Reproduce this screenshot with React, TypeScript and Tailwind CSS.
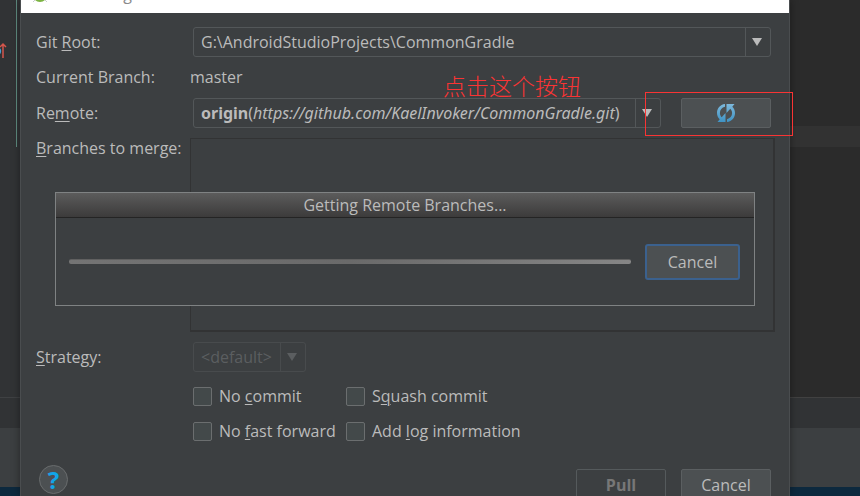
import type { ReactNode } from "react";

function Mnemonic({ children }: { children: ReactNode }) {
  return <span className="underline decoration-1 underline-offset-2">{children}</span>;
}

function Arrow({ dim }: { dim?: boolean }) {
  return (
    <svg
      width="10"
      height="8"
      viewBox="0 0 10 8"
      className={dim ? "fill-[#5b5e60]" : "fill-[#bbbbbb]"}
      aria-hidden="true"
    >
      <path d="M0 0H10L5 8Z" />
    </svg>
  );
}

function Combo({ id, value, disabled }: { id: string; value: string; disabled?: boolean }) {
  return (
    <div
      className={
        disabled
          ? "flex h-[30px] w-[113px] rounded-[3px] border border-[#484b4d] text-[#5b5e60]"
          : "flex h-[30px] w-full rounded-[3px] border border-[#535759]"
      }
    >
      <select
        id={id}
        disabled={disabled}
        defaultValue={value}
        className="min-w-0 flex-1 appearance-none bg-transparent px-[7px] leading-6 outline-none"
      >
        <option>{value}</option>
      </select>
      <span
        className={
          disabled
            ? "flex w-[25px] items-center justify-center border-l border-[#484b4d] pr-[2px]"
            : "flex w-[25px] items-center justify-center border-l border-[#535759] pr-[2px]"
        }
      >
        <Arrow dim={disabled} />
      </span>
    </div>
  );
}

function Check({ children }: { children: ReactNode }) {
  return (
    <label className="flex h-5 items-center gap-[7px] whitespace-nowrap">
      <input
        type="checkbox"
        className="h-[19px] w-[19px] appearance-none rounded-[2px] border border-[#6b6e6f] bg-[#43494a]"
      />
      <span>{children}</span>
    </label>
  );
}

function RefreshIcon() {
  return (
    <svg width="18" height="18" viewBox="0 0 18 18" aria-hidden="true">
      <defs>
        <linearGradient id="refresh" x1="0" y1="0" x2="0" y2="1">
          <stop offset="0" stopColor="#7db9dc" />
          <stop offset="1" stopColor="#3f93c4" />
        </linearGradient>
      </defs>
      <g fill="url(#refresh)">
        <path d="M8 0C3 .5 0 4.500 0 9c0 2.500 1 4.700 2.700 6.300L.5 18H8.500V9L4.700 13.300C3.600 12.200 2.900 10.700 2.900 9c0-3 2-5.500 5.100-6.200Z" />
        <path d="M10 18c5-.5 8-4.500 8-9 0-2.500-1-4.700-2.700-6.300L17.500 0H9.500v9l3.800-4.300C14.400 5.800 15.100 7.300 15.100 9c0 3-2 5.500-5.100 6.200Z" />
      </g>
    </svg>
  );
}

function Gutter() {
  return (
    <div className="flex w-5 shrink-0 flex-col bg-[#313335]">
      <div className="flex h-[147px] justify-between pr-[3px]">
        <svg width="7" height="18" viewBox="0 0 7 18" className="mt-[42px]" aria-hidden="true">
          <path d="M0 6.500C1.500 7 1.500 11 0 12Z" fill="#4a9fd0" />
          <path d="M3 16V2M0 5L3 2L6 5" fill="none" stroke="#d5564c" strokeWidth="1.500" />
        </svg>
        <span className="w-px bg-[#5f8c81]" />
      </div>
      <div className="h-[250px]" />
      <div className="h-[31px] border-t border-[#3f4143]" />
      <div className="h-[59px] bg-[#3c3f41]" />
      <div className="flex-1 bg-[#0d293e]" />
    </div>
  );
}

function EditorEdge() {
  return (
    <div className="flex w-[70px] shrink-0 flex-col bg-[#2b2b2b]">
      <div className="h-[126px]" />
      <div className="h-[21px] bg-[#323232]" />
      <div className="h-[250px]" />
      <div className="h-[31px] border-t border-[#414141] bg-[#313335]" />
      <div className="h-[59px] bg-[#3c3f41]" />
      <div className="flex-1 bg-[#0d293e]" />
    </div>
  );
}

function TitleBar() {
  return (
    <header className="flex h-[13px] items-start overflow-hidden bg-white pl-3">
      <svg width="14" height="3" viewBox="0 0 14 3" aria-hidden="true">
        <path d="M2 0H12Q10 2 7 2T2 0Z" fill="#7cb342" />
        <path d="M0 2L2 0M14 2L12 0" stroke="#c9cdd0" />
      </svg>
      <h1 className="-mt-[18px] ml-1.5 h-6 leading-6 text-[#8a8a8a]">Pull Changes</h1>
    </header>
  );
}

function ProgressDialog() {
  return (
    <section
      role="dialog"
      aria-labelledby="progress-title"
      className="absolute inset-x-[34px] top-[192px] border border-[#7f8283] bg-[#3c3f41]"
    >
      <h2
        id="progress-title"
        className="h-[25px] border-b border-[#242424] bg-linear-to-b from-[#5c5c5c] to-[#3c3b3b] text-center leading-6"
      >
        Getting Remote Branches...
      </h2>
      <div className="flex h-[87px] items-center gap-[14px] pr-[14px] pl-[13px]">
        <div
          role="progressbar"
          aria-labelledby="progress-title"
          className="h-[5px] flex-1 rounded-[2px] border-t border-[#606060] bg-linear-to-r from-[#747474] via-[#6a6a6a] to-[#868686]"
        />
        <button
          type="button"
          className="h-9 w-[95px] rounded-[3px] border-2 border-[#3b618e] bg-[#4c5052]"
        >
          Cancel
        </button>
      </div>
    </section>
  );
}

export default function App() {
  return (
    <div className="flex h-screen overflow-hidden bg-[#2b2b2b] font-['Open_Sans','Noto_Sans_CJK_SC',sans-serif] text-base text-[#bbbbbb]">
      <Gutter />
      <main className="relative min-w-0 flex-1 border-x border-[#4a4d4f] bg-[#3c3f41] shadow-[0_0_8px_rgba(0,0,0,0.4)]">
        <TitleBar />
        <form className="flex flex-col px-[15px] pt-[14px]">
          <div className="flex items-center pr-[3px]">
            <label htmlFor="root" className="w-[157px] shrink-0">
              Git <Mnemonic>R</Mnemonic>oot:
            </label>
            <Combo id="root" value="G:\AndroidStudioProjects\CommonGradle" />
          </div>
          <div className="flex h-[41px] items-center pb-[2px]">
            <span className="w-[154px]">Current Branch:</span>
            <span>master</span>
          </div>
          <div className="flex items-center pr-[3px]">
            <label htmlFor="remote" className="w-[157px] shrink-0">
              Re<Mnemonic>m</Mnemonic>ote:
            </label>
            <button
              id="remote"
              type="button"
              aria-haspopup="listbox"
              className="flex h-[30px] min-w-0 flex-1 items-stretch rounded-[3px] border border-[#535759] text-left"
            >
              <span className="min-w-0 flex-1 overflow-hidden pl-[7px] font-['Noto_Sans',sans-serif] leading-7 whitespace-nowrap">
                <b>origin</b>(<i>https://github.com/KaelInvoker/CommonGradle.git</i>)
              </span>
              <span className="flex w-[25px] items-center justify-center border-l border-[#535759] pr-[2px]">
                <Arrow />
              </span>
            </button>
            <button
              type="button"
              aria-label="Refresh remote branches"
              className="ml-5 flex h-[30px] w-[90px] items-center justify-center rounded-[2px] border border-[#5b5f61] bg-[#4c5052]"
            >
              <RefreshIcon />
            </button>
          </div>
          <div className="mt-[10px] -mr-px flex">
            <span className="w-[154px] shrink-0 leading-5">
              <Mnemonic>B</Mnemonic>ranches to merge:
            </span>
            <div className="h-[194px] flex-1 border-t border-r-2 border-b-2 border-l border-[#323334]" />
          </div>
          <div className="mt-[10px] flex items-center">
            <label htmlFor="strategy" className="w-[157px]">
              <Mnemonic>S</Mnemonic>trategy:
            </label>
            <Combo id="strategy" value="<default>" disabled />
          </div>
          <div className="mt-[14px] ml-[157px] grid grid-cols-[153px_1fr] gap-y-[15px]">
            <Check>
              No <Mnemonic>c</Mnemonic>ommit
            </Check>
            <Check>
              S<Mnemonic>q</Mnemonic>uash commit
            </Check>
            <Check>
              No <Mnemonic>f</Mnemonic>ast forward
            </Check>
            <Check>
              Add <Mnemonic>l</Mnemonic>og information
            </Check>
          </div>
          <footer className="mt-6 flex items-start gap-[15px] pr-[3px] pl-[3px]">
            <button
              type="button"
              aria-label="Help"
              className="mr-auto flex h-[29px] w-[29px] items-center justify-center rounded-full border border-[#696c6d] bg-[#4c5052] text-2xl leading-none font-bold text-[#11a5e8]"
            >
              ?
            </button>
            <button
              type="button"
              disabled
              className="mt-1 h-8 w-[90px] rounded-[2px] border border-[#555a5c] font-bold text-[#777777]"
            >
              Pull
            </button>
            <button
              type="button"
              className="mt-1 h-8 w-[90px] rounded-[2px] border border-[#5b5f61] bg-[#4c5052]"
            >
              Cancel
            </button>
          </footer>
        </form>
        <ProgressDialog />
        <div className="pointer-events-none absolute top-[92px] -right-1 h-11 w-[148px] border border-[#f93434]" />
        <p className="absolute top-[72px] right-[208px] text-[23px] leading-7 font-light text-[#f93434]">
          点击这个按钮
        </p>
      </main>
      <EditorEdge />
    </div>
  );
}
